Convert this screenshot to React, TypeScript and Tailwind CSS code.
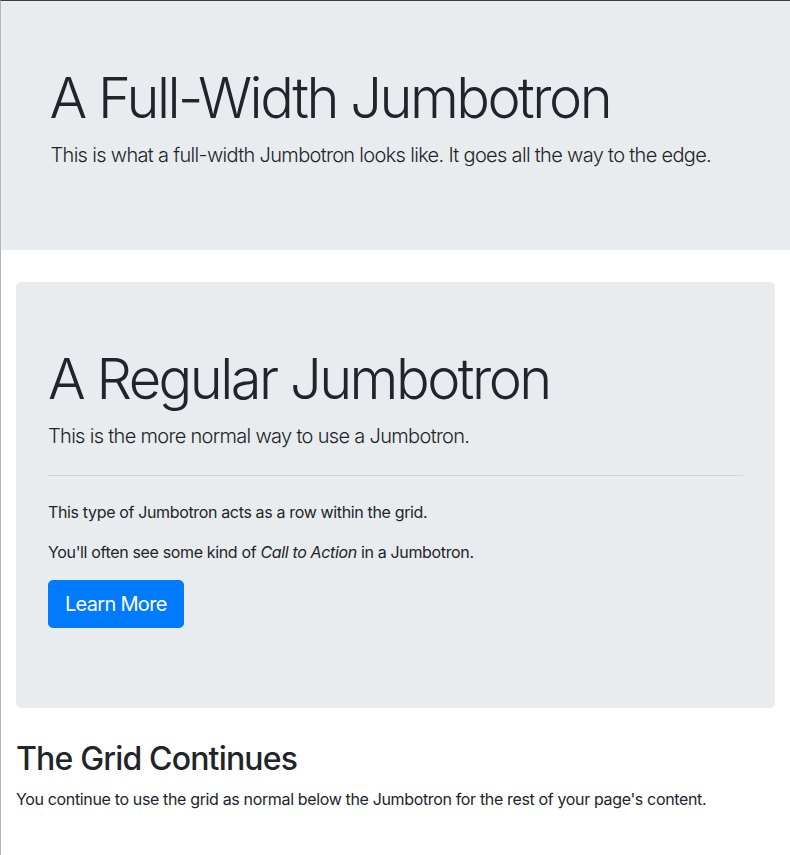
export default function App() {
  return (
    <div className="min-h-[855px] border-l border-t border-l-[#b5b5b5] border-t-[#3b3f45] bg-white font-['Inter','Liberation_Sans',sans-serif] text-[16px] leading-[1.5] tracking-[-0.022em] text-[#212529]">
      <div className="mb-8 bg-[#e9ecef] py-16">
        <div className="mx-auto max-w-[720px] px-[15px]">
          <h1 className="mb-2 -ml-[1px] text-[56px] font-light leading-[1.2] tracking-[-0.045em]">A Full-Width Jumbotron</h1>
          <p className="mb-4 text-[20px] font-light leading-[1.5] tracking-[-0.034em]">
            This is what a full-width Jumbotron looks like. It goes all the way to the edge.
          </p>
        </div>
      </div>

      <div className="px-[15px]">
        <div className="mb-8 rounded-[4.8px] bg-[#e9ecef] px-8 py-16">
          <h1 className="mb-2 text-[56px] font-light leading-[1.2] tracking-[-0.045em]">A Regular Jumbotron</h1>
          <p className="mb-4 text-[20px] font-light leading-[1.5] tracking-[-0.034em]">
            This is the more normal way to use a Jumbotron.
          </p>
          <hr className="my-6 border-t border-black/10" />
          <p className="mb-4">This type of Jumbotron acts as a row within the grid.</p>
          <p className="mb-4">
            You'll often see some kind of <em>Call to Action</em> in a Jumbotron.
          </p>
          <p className="mb-4 text-[20px] font-light">
            <a
              href="#"
              className="inline-block rounded-[4.8px] border border-[#007bff] bg-[#007bff] px-4 py-2 text-[20px] font-normal leading-[1.5] tracking-[-0.035em] text-white"
            >
              Learn More
            </a>
          </p>
        </div>

        <h2 className="mb-2 text-[32px] font-medium leading-[1.2] tracking-[-0.026em]">The Grid Continues</h2>
        <p className="mb-4">
          You continue to use the grid as normal below the Jumbotron for the rest of your page's content.
        </p>
      </div>
    </div>
  );
}
